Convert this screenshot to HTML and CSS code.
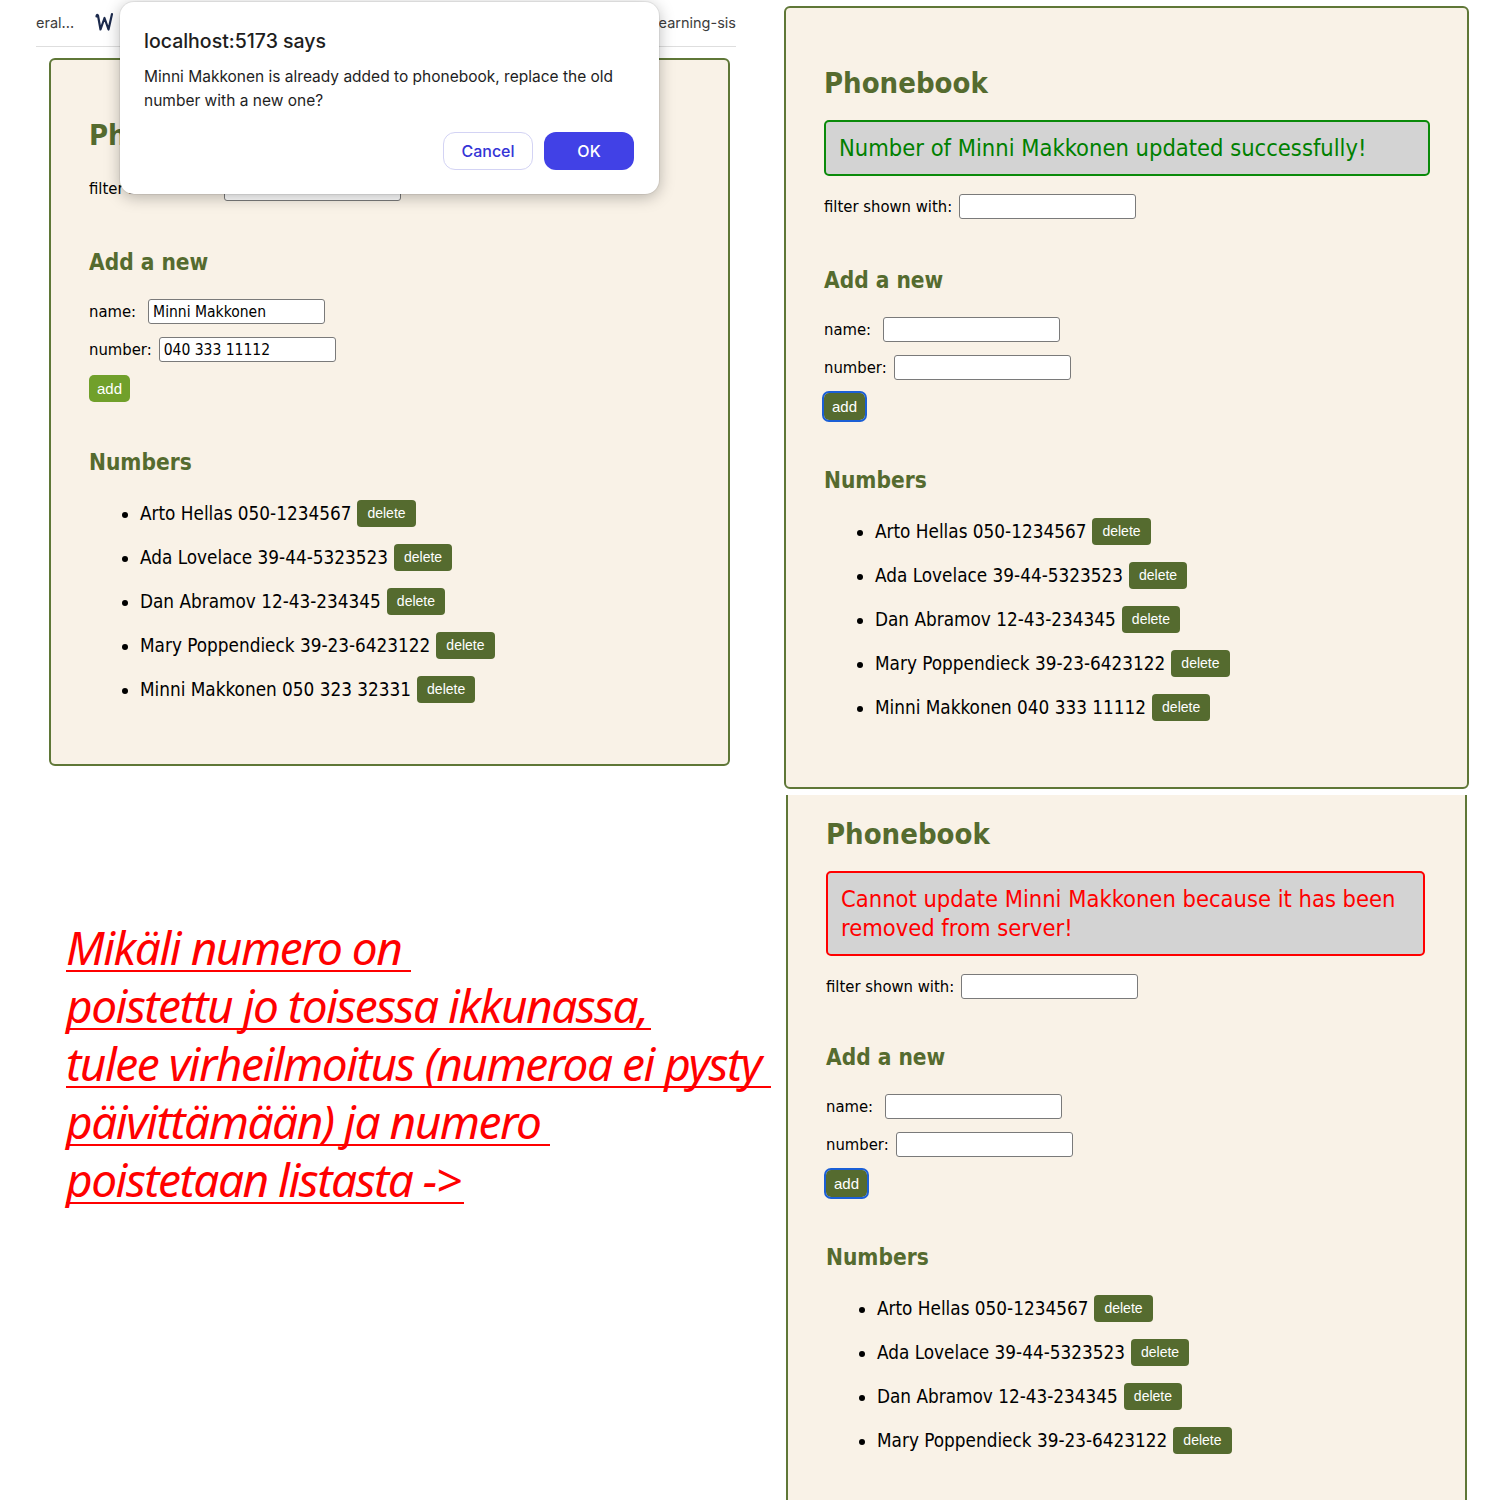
FILE: index.html
```html
<!DOCTYPE html>
<html lang="en">
<head>
<meta charset="utf-8">
<title>Phonebook</title>
<link rel="stylesheet" href="styles.css">
</head>
<body>
<div class="page">
  <div class="col-left">
    <div class="browser">
      <div class="bookmarks">
        <span class="bm">eral...</span>
        <span class="bm-logo"><svg width="19" height="20" viewBox="0 0 19 20"><path d="M1.5 4.5 C1.5 3 2.5 2.5 3 3.5 L5.5 17.5 L9.5 6 L13.5 17.5 L17 2" fill="none" stroke="#1c2a4d" stroke-width="2.2" stroke-linejoin="round" stroke-linecap="round"/></svg></span>
        <span class="bm bm-last">learning-sis</span>
      </div>
      <div class="panel panel-left">
        <h1 class="title">Phonebook</h1>
        <div class="row filter">filter shown with:<input class="field" type="text"></div>
        <h2 class="subtitle">Add a new</h2>
        <div class="row row-name">name:<input class="field field-name" type="text" value="Minni Makkonen"></div>
        <div class="row row-number">number:<input class="field" type="text" value="040 333 11112"></div>
        <button class="add add-hover">add</button>
        <h2 class="subtitle subtitle-numbers">Numbers</h2>
        <ul class="people">
          <li>Arto Hellas 050-1234567<button class="del">delete</button></li>
          <li>Ada Lovelace 39-44-5323523<button class="del">delete</button></li>
          <li>Dan Abramov 12-43-234345<button class="del">delete</button></li>
          <li>Mary Poppendieck 39-23-6423122<button class="del">delete</button></li>
          <li>Minni Makkonen 050 323 32331<button class="del">delete</button></li>
        </ul>
      </div>
      <div class="dialog">
        <div class="dialog-title">localhost:5173 says</div>
        <div class="dialog-text">Minni Makkonen is already added to phonebook, replace the old number with a new one?</div>
        <div class="dialog-actions">
          <button class="dbtn dbtn-cancel">Cancel</button>
          <button class="dbtn dbtn-ok">OK</button>
        </div>
      </div>
    </div>
    <div class="note">
      <div class="note-line">Mikäli numero on</div>
      <div class="note-line note-tight">poistettu jo toisessa ikkunassa,</div>
      <div class="note-line">tulee virheilmoitus (numeroa ei pysty</div>
      <div class="note-line">päivittämään) ja numero</div>
      <div class="note-line note-tight">poistetaan listasta -&gt;</div>
    </div>
  </div>
  <div class="col-right">
    <div class="panel panel-top">
      <h1 class="title">Phonebook</h1>
      <div class="msg msg-ok">Number of Minni Makkonen updated successfully!</div>
      <div class="row filter">filter shown with:<input class="field" type="text"></div>
      <h2 class="subtitle">Add a new</h2>
      <div class="row row-name">name:<input class="field field-name" type="text"></div>
      <div class="row row-number">number:<input class="field" type="text"></div>
      <button class="add add-focus">add</button>
      <h2 class="subtitle subtitle-numbers">Numbers</h2>
      <ul class="people">
        <li>Arto Hellas 050-1234567<button class="del">delete</button></li>
        <li>Ada Lovelace 39-44-5323523<button class="del">delete</button></li>
        <li>Dan Abramov 12-43-234345<button class="del">delete</button></li>
        <li>Mary Poppendieck 39-23-6423122<button class="del">delete</button></li>
        <li>Minni Makkonen 040 333 11112<button class="del">delete</button></li>
      </ul>
    </div>
    <div class="panel panel-cut">
      <h1 class="title">Phonebook</h1>
      <div class="msg msg-error">Cannot update Minni Makkonen because it has been removed from server!</div>
      <div class="row filter">filter shown with:<input class="field" type="text"></div>
      <h2 class="subtitle">Add a new</h2>
      <div class="row row-name">name:<input class="field field-name" type="text"></div>
      <div class="row row-number">number:<input class="field" type="text"></div>
      <button class="add add-focus">add</button>
      <h2 class="subtitle subtitle-numbers">Numbers</h2>
      <ul class="people">
        <li>Arto Hellas 050-1234567<button class="del">delete</button></li>
        <li>Ada Lovelace 39-44-5323523<button class="del">delete</button></li>
        <li>Dan Abramov 12-43-234345<button class="del">delete</button></li>
        <li>Mary Poppendieck 39-23-6423122<button class="del">delete</button></li>
      </ul>
    </div>
  </div>
</div>
</body>
</html>
```

FILE: styles.css
```css
html, body {
  margin: 0;
  background: #ffffff;
  overflow: hidden;
}

.page {
  display: grid;
  grid-template-columns: 784px 716px;
  height: 1500px;
  overflow: hidden;
}

/* ---------- left column ---------- */
.browser {
  position: relative;
}

.bookmarks {
  box-sizing: border-box;
  height: 47px;
  width: 700px;
  margin-left: 36px;
  border-bottom: 1px solid #dedede;
  display: flex;
  align-items: center;
  overflow: hidden;
  font-family: "Inter", "Liberation Sans", sans-serif;
  font-size: 14.5px;
  color: #3c3c3c;
  padding-bottom: 2px;
}

.bm-logo {
  display: flex;
  margin-left: 21px;
}

.bm-last {
  margin-left: auto;
}

.panel {
  box-sizing: border-box;
  background: #f9f2e7;
  border: 2px solid #5f7737;
  border-radius: 6px;
  padding: 57px 40px 0 38px;
  font-family: "DejaVu Sans Condensed", "DejaVu Sans", sans-serif;
  font-stretch: condensed;
  color: #000;
}

.panel-left {
  width: 681px;
  height: 708px;
  margin: 11px 0 0 49px;
}

.panel-top {
  width: 685px;
  height: 783px;
  margin-top: 6px;
  padding-right: 37px;
}

.panel-cut {
  width: 681px;
  height: 705px;
  margin: 6px 0 0 2px;
  border-top: none;
  border-bottom: none;
  border-radius: 0;
  padding-top: 21px;
}

.title {
  margin: 0;
  font-size: 29px;
  line-height: 36px;
  font-weight: bold;
  color: #556b2f;
}

.subtitle {
  margin: 47px 0 0;
  font-size: 22.5px;
  line-height: 28px;
  font-weight: bold;
  color: #556b2f;
}

.panel-cut .filter + .subtitle {
  margin-top: 44px;
}

.subtitle-numbers {
  margin-top: 46px;
}

.msg {
  margin: 19px 0 18px;
  border: 2px solid;
  border-radius: 5px;
  background: #d3d3d3;
  padding: 12px 13px 11px;
  font-size: 23.5px;
  line-height: 29px;
}

.msg-ok {
  color: #008000;
  border-color: #0a8a0a;
}

.msg-error {
  color: #ff0000;
  border-color: #ff0000;
}

.row {
  display: flex;
  align-items: center;
  height: 25px;
  font-size: 16.5px;
}

.title + .filter {
  margin-top: 23px;
}

.row-name {
  margin-top: 23px;
}

.row-number {
  margin-top: 13px;
}

.field {
  box-sizing: border-box;
  width: 177px;
  height: 25px;
  margin-left: 7px;
  border: 1px solid #7a7a7a;
  border-radius: 3px;
  background: #ffffff;
  padding: 1px 4px 0;
  font-family: "DejaVu Sans Condensed", "DejaVu Sans", sans-serif;
  font-stretch: condensed;
  font-size: 15.5px;
  color: #000;
}

.field-name {
  margin-left: 12px;
}

.add {
  display: block;
  margin-top: 13px;
  height: 27px;
  padding: 0 8px;
  border: none;
  border-radius: 5px;
  background: #556b2f;
  color: #ffffff;
  font-family: "Liberation Sans", Arial, sans-serif;
  font-size: 15px;
}

.add-hover {
  background: #71a02b;
}

.add-focus {
  outline: 2px solid #1b5fd6;
  outline-offset: 0;
}

.people {
  margin: 16px 0 0;
  padding-left: 51px;
  list-style: disc;
}

.people li {
  line-height: 44px;
  height: 44px;
  font-size: 18.8px;
}

.del {
  display: inline-block;
  vertical-align: middle;
  margin-left: 6px;
  height: 27px;
  padding: 0 10px;
  border: none;
  border-radius: 4px;
  background: #556b2f;
  color: #ffffff;
  font-family: "Liberation Sans", Arial, sans-serif;
  font-size: 14px;
  line-height: 27px;
  position: relative;
  top: -1px;
}

/* ---------- alert dialog ---------- */
.dialog {
  position: absolute;
  left: 120px;
  top: 2px;
  box-sizing: border-box;
  width: 539px;
  height: 192px;
  background: #ffffff;
  border-radius: 14px;
  box-shadow: 0 3px 16px rgba(0, 0, 0, 0.28), 0 0 0 1px rgba(0, 0, 0, 0.06);
  padding: 27px 25px 24px 24px;
  font-family: "Inter", "Liberation Sans", sans-serif;
  color: #1e1e1e;
}

.dialog-title {
  font-size: 19.5px;
  font-weight: 500;
  line-height: 24px;
}

.dialog-text {
  margin-top: 12px;
  font-size: 15.5px;
  line-height: 24px;
}

.dialog-actions {
  display: flex;
  justify-content: flex-end;
  gap: 11px;
  margin-top: 19px;
}

.dbtn {
  width: 90px;
  height: 38px;
  border-radius: 12px;
  font-family: "Inter", "Liberation Sans", sans-serif;
  font-size: 16px;
  font-weight: 500;
}

.dbtn-cancel {
  background: #ffffff;
  border: 1.5px solid #d3d3f4;
  color: #3434d6;
}

.dbtn-ok {
  background: #4141e6;
  border: none;
  color: #ffffff;
}

/* ---------- annotation ---------- */
.note {
  margin: 158px 0 0 66px;
  color: #ff0000;
  font-family: "Noto Sans", "Lato", sans-serif;
  font-style: italic;
  font-size: 46px;
  letter-spacing: -1.5px;
}

.note-line {
  width: fit-content;
  white-space: nowrap;
  line-height: 46px;
  border-bottom: 2px solid #ff0000;
  margin-bottom: 10px;
  padding-right: 10px;
}

.note-tight {
  padding-right: 3px;
}
```
